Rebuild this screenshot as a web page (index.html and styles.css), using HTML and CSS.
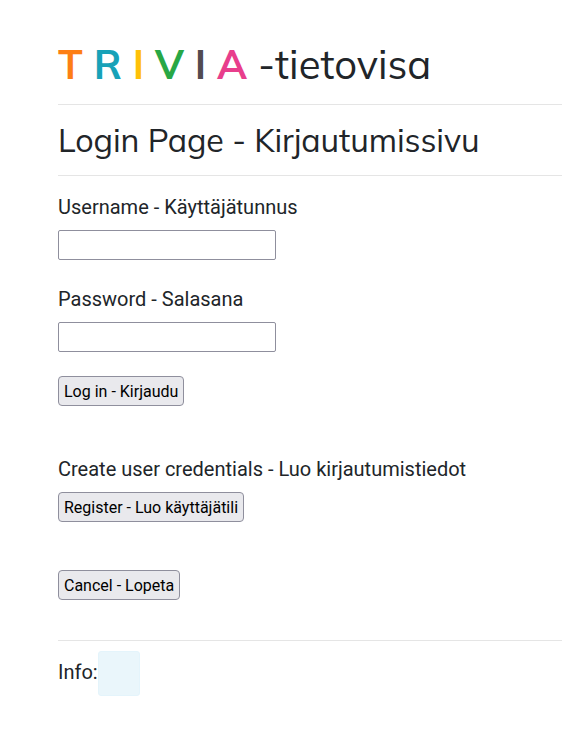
FILE: index.html
```html
<!DOCTYPE html>
<html lang="fi">
<head>
<meta charset="utf-8">
<title>Trivia -tietovisa</title>
<link rel="stylesheet" href="styles.css">
</head>
<body>
<main class="container">
<h1 class="brand"><span class="letters"><b class="orange">T</b><b class="teal">R</b><b class="yellow">I</b><b class="green">V</b><b class="gray">I</b><b class="pink">A</b></span><span class="brand-tail">-tietovisa</span></h1>
<hr>
<h2 class="title"><span>Login Page - Kirjautumissivu</span></h2>
<hr>
<form class="form">
<label class="label" for="user">Username - Käyttäjätunnus</label>
<input class="field" id="user" type="text">
<label class="label second" for="pass">Password - Salasana</label>
<input class="field" id="pass" type="password">
<button class="btn login" type="button">Log in - Kirjaudu</button>
<h5 class="label create">Create user credentials - Luo kirjautumistiedot</h5>
<button class="btn register" type="button">Register - Luo käyttäjätili</button>
<button class="btn cancel" type="button">Cancel - Lopeta</button>
</form>
<hr>
<div class="info"><span class="info-label">Info:</span><span class="info-box"></span></div>
</main>
</body>
</html>
```
FILE: styles.css
```css
* { box-sizing: border-box; }
body { margin: 0; background: #fff; color: #212529; font-family: Roboto, sans-serif; overflow: hidden; }
.container { padding: 40px 0 0 58px; }
hr { margin: 0; border: 0; border-top: 1px solid #e5e5e5; }
.brand { display: flex; margin: 0; height: 64px; font: 400 40px/48px Muli, Mulish, "Nunito Sans", Nunito, sans-serif; }
.letters { display: flex; width: 200px; justify-content: space-between; padding-right: 11px; }
.letters b { font-weight: 700; }
.orange { color: #fd7e14; }
.teal { color: #17a2b8; }
.yellow { color: #ffc107; }
.green { color: #28a745; }
.gray { color: #524b50; }
.pink { color: #e83e8c; }
.title { margin: 0; height: 70px; padding-top: 16px; font: 400 32.2px/38px Muli, Mulish, "Nunito Sans", Nunito, sans-serif; letter-spacing: -0.07px; }
.form { display: flex; flex-direction: column; align-items: flex-start; height: 464px; padding-top: 19px; }
.label { margin: 0 0 11px; font-size: 20px; font-weight: 400; line-height: 24px; }
.field { width: 218px; height: 30px; border: 1px solid #8f8f9d; border-radius: 2px; padding: 0; background: #fff; }
.second { margin-top: 27px; }
.btn { height: 30px; padding: 2px 5px 0; border: 1px solid #8f8f9d; border-radius: 4px; background: #e9e9ed; color: #000; font: 16px/24px Roboto, sans-serif; white-space: nowrap; }
.login { width: 126px; margin-top: 24px; }
.create { margin-top: 51px; }
.register { width: 186px; }
.cancel { width: 122px; margin-top: 48px; }
.info { display: flex; padding-top: 10px; font-size: 20px; line-height: 42px; }
.info-label { width: 40px; }
.info-box { width: 42px; height: 45px; border: 1px solid #e4f4fb; border-radius: 3px; background: #eaf6fb; }
```
